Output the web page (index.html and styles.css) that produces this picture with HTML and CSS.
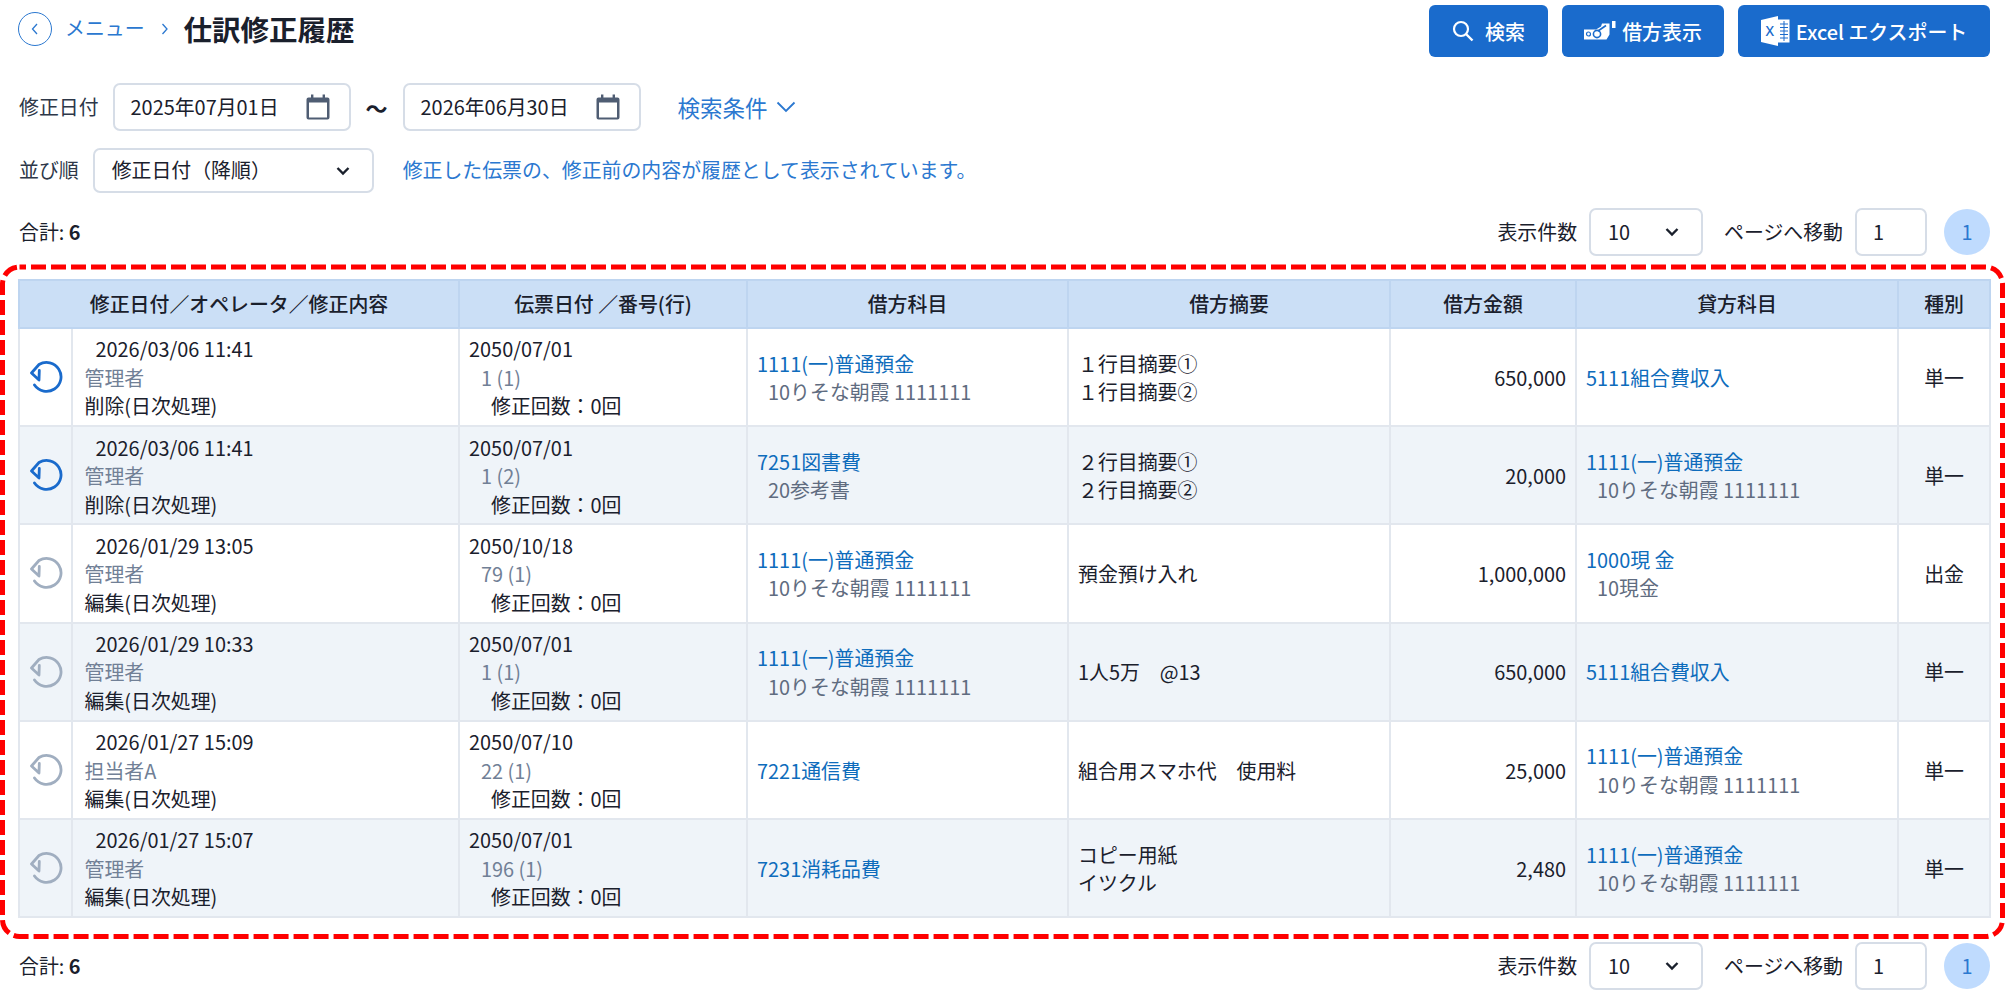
FILE: index.html
```html
<!DOCTYPE html>
<html lang="ja">
<head>
<meta charset="utf-8">
<title>仕訳修正履歴</title>
<link rel="stylesheet" href="styles.css">
</head>
<body>
<svg class="defs" width="0" height="0" aria-hidden="true">
  <symbol id="i-restore" viewBox="0 0 34 34">
    <path d="M5.500 25 A14.500 14.500 0 1 0 10 4.500 L2.500 13 L10 20 L10.300 10.500" fill="none" stroke="currentColor" stroke-width="2.800" stroke-linecap="round" stroke-linejoin="round"/>
  </symbol>
  <symbol id="i-calendar" viewBox="0 0 24 26">
    <path d="M5 0.500h2.400v3h9.200v-3H19v3h2.500a2 2 0 0 1 2 2v18a2 2 0 0 1-2 2h-19a2 2 0 0 1-2-2v-18a2 2 0 0 1 2-2H5z" fill="currentColor"/>
    <rect x="3" y="8.500" width="18" height="15" fill="#fff"/>
  </symbol>
  <symbol id="i-chev" viewBox="0 0 14 10">
    <path d="M1.500 2 L7 7.500 L12.500 2" fill="none" stroke="currentColor" stroke-width="2.400"/>
  </symbol>
</svg>

<header class="topbar">
  <div class="crumbs">
    <a class="back" href="#"><svg width="10" height="14" viewBox="0 0 10 14"><path d="M7 2 L2.500 7 L7 12" fill="none" stroke="currentColor" stroke-width="1.300"/></svg></a>
    <a class="crumb-link" href="#">メニュー</a>
    <svg class="crumb-sep" width="8" height="14" viewBox="0 0 8 14"><path d="M1.500 2 L6 7 L1.500 12" fill="none" stroke="currentColor" stroke-width="1.300"/></svg>
    <h1 class="title">仕訳修正履歴</h1>
  </div>
  <div class="actions">
    <button class="btn btn-search">
      <svg width="22" height="22" viewBox="0 0 22 22"><circle cx="9" cy="9" r="7" fill="none" stroke="#fff" stroke-width="2.200"/><path d="M14 14 L20.500 20.500" stroke="#fff" stroke-width="2.400"/></svg>
      検索
    </button>
    <button class="btn btn-debit">
      <svg width="32" height="22" viewBox="0 0 32 22">
        <path d="M0 9.500h12l5-3 1-3h7.500v11l-3 5H0z" fill="#fff"/>
        <rect x="28" y="1" width="3.500" height="7" fill="#fff"/>
        <circle cx="4.500" cy="14" r="2" fill="none" stroke="#1a6bcc" stroke-width="1.200"/>
        <circle cx="13" cy="14" r="3.600" fill="none" stroke="#1a6bcc" stroke-width="1.600"/>
        <path d="M14 11 L22 5.500" stroke="#1a6bcc" stroke-width="1.600"/>
      </svg>
      借方表示
    </button>
    <button class="btn btn-excel">
      <svg width="29" height="30" viewBox="0 0 29 30">
        <path d="M0 4 L17 0 V30 L0 26z" fill="#fff"/>
        <rect x="17" y="3.500" width="11.500" height="23" fill="#fff"/>
        <path d="M19 8h8M19 11.500h8M19 15h8M19 18.500h8M19 22h8M23 5v20" stroke="#1a6bcc" stroke-width="1"/>
        <text x="4.500" y="20" class="xl-mark">X</text>
      </svg>
      Excel エクスポート
    </button>
  </div>
</header>

<section class="filter-row">
  <span class="label">修正日付</span>
  <div class="field date">
    <span>2025年07月01日</span>
    <svg class="cal" width="24" height="26"><use href="#i-calendar"/></svg>
  </div>
  <span class="tilde">～</span>
  <div class="field date">
    <span>2026年06月30日</span>
    <svg class="cal" width="24" height="26"><use href="#i-calendar"/></svg>
  </div>
  <a class="more" href="#">検索条件<svg width="20" height="12" viewBox="0 0 20 12"><path d="M1.500 1.500 L10 10 L18.500 1.500" fill="none" stroke="currentColor" stroke-width="1.800"/></svg></a>
</section>

<section class="sort-row">
  <span class="label">並び順</span>
  <div class="field sort">
    <span>修正日付（降順）</span>
    <svg class="chev" width="14" height="10"><use href="#i-chev"/></svg>
  </div>
  <p class="hint">修正した伝票の、修正前の内容が履歴として表示されています。</p>
</section>

<section class="pager">
  <span class="total">合計: <b>6</b></span>
  <span class="pager-label">表示件数</span>
  <div class="field size"><span>10</span><svg class="chev" width="14" height="10"><use href="#i-chev"/></svg></div>
  <span class="pager-label goto">ページへ移動</span>
  <div class="field page-input"><span>1</span></div>
  <span class="page-no">1</span>
</section>

<section class="table-wrap">
  <svg class="marker" width="2005" height="675"><rect x="2.500" y="3" width="2000" height="669.500" rx="17" ry="17"/></svg>
  <table class="grid">
    <colgroup>
      <col class="c1"><col class="c2"><col class="c3"><col class="c4"><col class="c5"><col class="c6"><col class="c7"><col class="c8">
    </colgroup>
    <thead>
      <tr>
        <th colspan="2">修正日付／オペレータ／修正内容</th>
        <th>伝票日付 ／番号(行)</th>
        <th>借方科目</th>
        <th>借方摘要</th>
        <th>借方金額</th>
        <th>貸方科目</th>
        <th>種別</th>
      </tr>
    </thead>
    <tbody>
      <tr>
        <td class="ic on"><svg width="34" height="34"><use href="#i-restore"/></svg></td>
        <td class="op"><div class="in1">2026/03/06 11:41</div><div class="mut">管理者</div><div>削除(日次処理)</div></td>
        <td><div>2050/07/01</div><div class="mut in2">1 (1)</div><div class="in3">修正回数：0回</div></td>
        <td><div class="lnk">1111(一)普通預金</div><div class="sub">10りそな朝霞 1111111</div></td>
        <td><div>１行目摘要①</div><div>１行目摘要②</div></td>
        <td class="num">650,000</td>
        <td><div class="lnk">5111組合費収入</div></td>
        <td class="ctr">単一</td>
      </tr>
      <tr>
        <td class="ic on"><svg width="34" height="34"><use href="#i-restore"/></svg></td>
        <td class="op"><div class="in1">2026/03/06 11:41</div><div class="mut">管理者</div><div>削除(日次処理)</div></td>
        <td><div>2050/07/01</div><div class="mut in2">1 (2)</div><div class="in3">修正回数：0回</div></td>
        <td><div class="lnk">7251図書費</div><div class="sub">20参考書</div></td>
        <td><div>２行目摘要①</div><div>２行目摘要②</div></td>
        <td class="num">20,000</td>
        <td><div class="lnk">1111(一)普通預金</div><div class="sub">10りそな朝霞 1111111</div></td>
        <td class="ctr">単一</td>
      </tr>
      <tr>
        <td class="ic"><svg width="34" height="34"><use href="#i-restore"/></svg></td>
        <td class="op"><div class="in1">2026/01/29 13:05</div><div class="mut">管理者</div><div>編集(日次処理)</div></td>
        <td><div>2050/10/18</div><div class="mut in2">79 (1)</div><div class="in3">修正回数：0回</div></td>
        <td><div class="lnk">1111(一)普通預金</div><div class="sub">10りそな朝霞 1111111</div></td>
        <td><div>預金預け入れ</div></td>
        <td class="num">1,000,000</td>
        <td><div class="lnk">1000現 金</div><div class="sub">10現金</div></td>
        <td class="ctr">出金</td>
      </tr>
      <tr>
        <td class="ic"><svg width="34" height="34"><use href="#i-restore"/></svg></td>
        <td class="op"><div class="in1">2026/01/29 10:33</div><div class="mut">管理者</div><div>編集(日次処理)</div></td>
        <td><div>2050/07/01</div><div class="mut in2">1 (1)</div><div class="in3">修正回数：0回</div></td>
        <td><div class="lnk">1111(一)普通預金</div><div class="sub">10りそな朝霞 1111111</div></td>
        <td><div>1人5万　@13</div></td>
        <td class="num">650,000</td>
        <td><div class="lnk">5111組合費収入</div></td>
        <td class="ctr">単一</td>
      </tr>
      <tr>
        <td class="ic"><svg width="34" height="34"><use href="#i-restore"/></svg></td>
        <td class="op"><div class="in1">2026/01/27 15:09</div><div class="mut">担当者A</div><div>編集(日次処理)</div></td>
        <td><div>2050/07/10</div><div class="mut in2">22 (1)</div><div class="in3">修正回数：0回</div></td>
        <td><div class="lnk">7221通信費</div></td>
        <td><div>組合用スマホ代　使用料</div></td>
        <td class="num">25,000</td>
        <td><div class="lnk">1111(一)普通預金</div><div class="sub">10りそな朝霞 1111111</div></td>
        <td class="ctr">単一</td>
      </tr>
      <tr>
        <td class="ic"><svg width="34" height="34"><use href="#i-restore"/></svg></td>
        <td class="op"><div class="in1">2026/01/27 15:07</div><div class="mut">管理者</div><div>編集(日次処理)</div></td>
        <td><div>2050/07/01</div><div class="mut in2">196 (1)</div><div class="in3">修正回数：0回</div></td>
        <td><div class="lnk">7231消耗品費</div></td>
        <td><div>コピー用紙</div><div>イツクル</div></td>
        <td class="num">2,480</td>
        <td><div class="lnk">1111(一)普通預金</div><div class="sub">10りそな朝霞 1111111</div></td>
        <td class="ctr">単一</td>
      </tr>
    </tbody>
  </table>
</section>

<section class="pager pager-bottom">
  <span class="total">合計: <b>6</b></span>
  <span class="pager-label">表示件数</span>
  <div class="field size"><span>10</span><svg class="chev" width="14" height="10"><use href="#i-chev"/></svg></div>
  <span class="pager-label goto">ページへ移動</span>
  <div class="field page-input"><span>1</span></div>
  <span class="page-no">1</span>
</section>
</body>
</html>
```

FILE: styles.css
```css
* { box-sizing: border-box; }
html, body { margin: 0; padding: 0; }
body {
  width: 2005px;
  height: 997px;
  overflow: hidden;
  background: #fff;
  color: #1a202c;
  font-family: "Noto Sans CJK JP", "Noto Sans", sans-serif;
  font-size: 19.9px;
  line-height: 28.5px;
}
a { text-decoration: none; }
.defs { position: absolute; }

.topbar {
  display: flex;
  justify-content: space-between;
  align-items: center;
  height: 52px;
  margin-top: 5px;
  padding: 0 15px 0 18px;
}
.crumbs { display: flex; align-items: center; color: #2b78d0; margin-top: -5px; }
.back {
  display: flex;
  align-items: center;
  justify-content: center;
  width: 34px;
  height: 34px;
  border: 1.5px solid #2b78d0;
  border-radius: 50%;
  color: #2b78d0;
}
.crumb-link { margin-left: 13px; color: #2b78d0; }
.crumb-sep { margin-left: 16px; }
.title { margin: 0 0 0 15px; font-size: 28.5px; line-height: 40px; font-weight: 700; color: #1a202c; }

.actions { display: flex; gap: 14px; }
.btn {
  display: flex;
  align-items: center;
  justify-content: center;
  height: 52px;
  border: 0;
  border-radius: 6px;
  background: #1a6bcc;
  color: #fff;
  font: 500 19.9px "Noto Sans CJK JP", sans-serif;
}
.btn-search { width: 119px; gap: 11px; }
.btn-debit { width: 162px; gap: 6px; }
.btn-excel { width: 252px; gap: 6px; }
.xl-mark { font: 500 14px "Noto Sans", sans-serif; fill: #1a6bcc; }

.filter-row, .sort-row { display: flex; align-items: center; padding-left: 19px; }
.filter-row { margin-top: 26px; height: 48px; }
.sort-row { margin-top: 17px; height: 45px; }
.label { color: #2d3748; }
.field {
  display: flex;
  align-items: center;
  justify-content: space-between;
  background: #fff;
  border: 2px solid #d6dde7;
  border-radius: 7px;
}
.date { width: 238px; height: 48px; margin-left: 14px; padding: 0 19px 0 16px; }
.cal { color: #4f5d73; }
.tilde { width: 52px; text-align: center; font-weight: 700; font-size: 22px; }
.tilde + .date { margin-left: 0; }
.more { display: flex; align-items: center; gap: 8px; margin-left: 37px; font-size: 22.5px; color: #2b78d0; }
.sort { width: 281px; height: 45px; margin-left: 14px; padding: 0 22px 0 17px; }
.chev { color: #1a202c; }
.hint { margin: 0 0 0 29px; color: #2b78d0; }

.pager {
  display: flex;
  align-items: center;
  margin-top: 15px;
  height: 48px;
  padding: 0 15px 0 19px;
}
.total { margin-right: auto; }
.total b { font-weight: 700; }
.size { width: 114px; height: 48px; margin-left: 12px; padding: 0 22px 0 17px; }
.goto { margin-left: 21px; }
.page-input { width: 72px; height: 48px; margin-left: 12px; padding-left: 16px; }
.page-no {
  display: flex;
  align-items: center;
  justify-content: center;
  width: 46px;
  height: 46px;
  margin-left: 17px;
  border-radius: 50%;
  background: #bfdbfe;
  color: #2b78d0;
}
.pager-bottom { margin-top: 3px; }

.table-wrap {
  position: relative;
  margin-top: 8px;
  padding: 15px 15px 21px 18px;
}
.marker { position: absolute; left: 0; top: 0; pointer-events: none; }
.marker rect {
  fill: none;
  stroke: #ff0000;
  stroke-width: 5;
  stroke-dasharray: 15 5;
  stroke-dashoffset: 8.5;
}

.grid {
  width: 1971px;
  table-layout: fixed;
  border-collapse: collapse;
}
.c1 { width: 53px; }
.c2 { width: 387px; }
.c3 { width: 288px; }
.c4 { width: 321px; }
.c5 { width: 322px; }
.c6 { width: 186px; }
.c7 { width: 322px; }
.c8 { width: 92px; }
.grid th {
  height: 48px;
  padding: 1px 0 0;
  background: #cbdff6;
  border: 2px solid #bed5f0;
  font-weight: 500;
  text-align: center;
  color: #1a202c;
}
.grid td {
  height: 98.2px;
  padding: 2px 9px 0;
  border: 2px solid #e2e7ee;
  vertical-align: middle;
}
.grid tbody tr:nth-child(even) td { background: #eff4f9; }
.ic { text-align: center; color: #a0aec0; }
.grid td.ic { padding: 0; }
.ic.on { color: #1a6bcc; }
.ic svg { display: block; margin: 0 auto; }
.grid td.op { padding-left: 11.5px; }
.in1 { padding-left: 11px; }
.in2 { padding-left: 12px; }
.in3 { padding-left: 22px; }
.mut { color: #718096; }
.lnk { color: #0e6cbc; }
.sub { padding-left: 11px; color: #5f6c80; }
.num { text-align: right; }
.ctr { text-align: center; }
```
